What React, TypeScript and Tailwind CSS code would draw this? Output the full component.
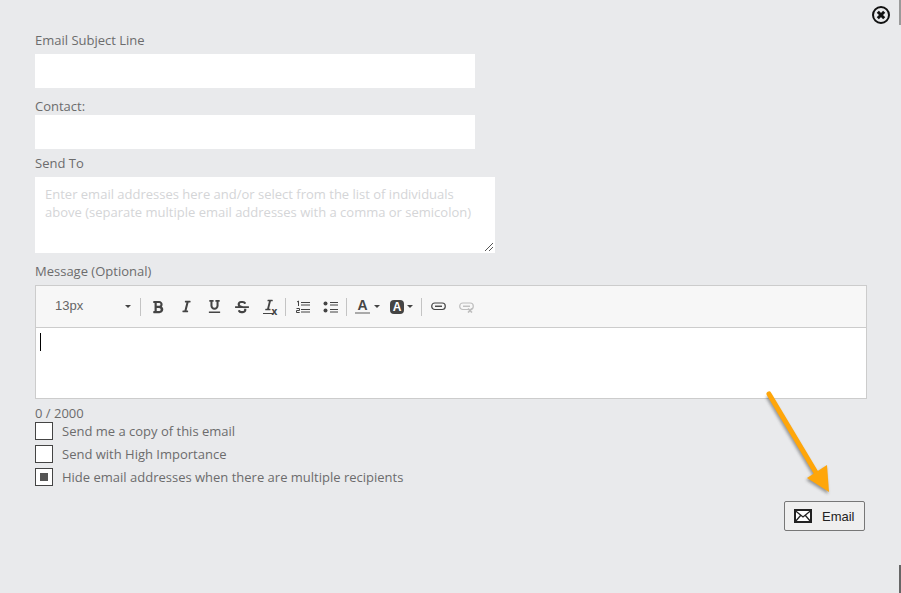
import type { ReactNode } from 'react';
import { FaBold, FaItalic, FaStrikethrough, FaUnderline } from 'react-icons/fa';

const Caret = ({ className = '' }: { className?: string }) => (
  <span className={`inline-block w-0 h-0 border-x-[3px] border-x-transparent border-t-[3px] border-t-[#444] ${className}`} />
);

const Divider = () => <span className="block w-px h-[18px] bg-[#c4c4c4]" />;

const Tool = ({ children }: { children: ReactNode }) => (
  <span className="w-[28px] h-[18px] flex items-center justify-center">{children}</span>
);

const LinkIcon = ({ off = false }: { off?: boolean }) => (
  <svg width="15" height="12" viewBox="0 0 15 12" fill="none" stroke={off ? '#bdbdbd' : '#444'} strokeWidth="1.2">
    <rect x="0.75" y="2" width="13.5" height="6.5" rx="3" />
    <path d="M4 5.25h7" strokeWidth="1.4" />
    {off && <path d="M9 7.5l4 4M13 7.5l-4 4" strokeWidth="1.6" />}
  </svg>
);

const Check = ({ label, checked = false, className = '' }: { label: string; checked?: boolean; className?: string }) => (
  <div className={`flex items-center h-[18px] ${className}`}>
    <span className="w-[18px] h-[18px] bg-white border border-[#444] flex items-center justify-center">
      {checked && <span className="w-2 h-2 bg-[#555]" />}
    </span>
    <span className="ml-[9px] pt-0.5 text-[13px]">{label}</span>
  </div>
);

const App = () => {
  return (
    <div className="relative w-[901px] h-[593px] overflow-hidden bg-[#e9eaec] pl-[35px] pt-[31px] font-['Open_Sans',sans-serif] text-[13px] text-[#6c6c6c]">
      <span className="absolute right-0 top-0 w-0.5 h-[25px] bg-[#9a9a9a]" />
      <span className="absolute right-0 top-[565px] w-0.5 h-7 bg-[#666]" />
      <svg className="absolute left-[872px] top-[6px]" width="18" height="18" viewBox="0 0 18 18">
        <circle cx="9" cy="9" r="8" fill="none" stroke="#111" strokeWidth="2" />
        <path d="M5.8 5.8l6.4 6.4M12.2 5.8l-6.4 6.4" stroke="#111" strokeWidth="3" />
      </svg>

      <div className="h-[18px] leading-[18px]">Email Subject Line</div>
      <div className="mt-[5px] w-[440px] h-[34px] bg-white" />
      <div className="mt-[9px] h-[18px] leading-[18px]">Contact:</div>
      <div className="w-[440px] h-[34px] bg-white" />
      <div className="mt-[5px] h-[18px] leading-[18px]">Send To</div>
      <div className="relative mt-[5px] w-[460px] h-[76px] bg-white px-2.5 py-2 leading-[18px] text-[#d4d5d7]">
        <p>Enter email addresses here and/or select from the list of individuals</p>
        <p>above (separate multiple email addresses with a comma or semicolon)</p>
        <svg className="absolute right-0.5 bottom-0.5" width="8" height="8" viewBox="0 0 8 8">
          <path d="M0 8L8 0M4 8L8 4" stroke="#555" strokeWidth="1" />
        </svg>
      </div>
      <div className="mt-[9px] h-[18px] leading-[18px]">Message (Optional)</div>
      <div className="mt-[5px] w-[832px] h-[114px] border border-[#ccc] bg-white">
        <div className="h-[42px] bg-[#f7f7f7] border-b border-[#ccc] flex items-center pl-[19px] text-[#444]">
          <span className="w-[70px] pb-0.5 text-[13px] text-[#666] font-['Liberation_Sans',sans-serif]">13px</span>
          <Caret />
          <span className="ml-[9px]"><Divider /></span>
          <div className="ml-[3px] flex items-center">
            <Tool><FaBold size={14} /></Tool>
            <Tool><FaItalic size={13} /></Tool>
            <Tool><FaUnderline size={13} /></Tool>
            <Tool><FaStrikethrough size={14} /></Tool>
            <Tool>
              <span className="relative w-[15px] h-[15px]">
                <FaItalic size={12} className="absolute left-0 top-0" />
                <span className="absolute left-0 bottom-0 w-[10px] h-px bg-[#444]" />
                <span className="absolute left-[9px] bottom-[-2px] text-[10px] leading-none font-bold">x</span>
              </span>
            </Tool>
          </div>
          <span className="ml-[1px]"><Divider /></span>
          <svg className="ml-[9px]" width="16" height="14" viewBox="0 0 16 14" fill="none" stroke="#444">
            <path d="M2 2l1.5-1v5M6 2.5h9M6 5h9M1.5 8.5h3v2h-3v2h3.2M6 9.5h9M6 12h9" />
          </svg>
          <svg className="ml-[12px]" width="16" height="14" viewBox="0 0 16 14" fill="#444">
            <circle cx="2.5" cy="3.5" r="2" />
            <circle cx="2.5" cy="10.5" r="2" />
            <path d="M7 2h8v1H7zM7 4.5h8v1H7zM7 9h8v1H7zM7 11.5h8v1H7z" />
          </svg>
          <span className="ml-[7px]"><Divider /></span>
          <span className="ml-[8px] relative w-[15px] h-[15px] flex justify-center text-[14px] leading-[13px] font-bold font-['Liberation_Sans',sans-serif]">
            A
            <span className="absolute left-0 bottom-0 w-[15px] h-0.5 bg-[#aaa]" />
          </span>
          <Caret className="ml-[4px]" />
          <span className="ml-[10px] w-[14px] h-[14px] bg-[#444] rounded-sm text-white flex items-center justify-center text-[12px] font-bold font-['Liberation_Sans',sans-serif]">A</span>
          <Caret className="ml-[3px]" />
          <span className="ml-[8px]"><Divider /></span>
          <span className="ml-[9px]"><LinkIcon /></span>
          <span className="ml-[13px]"><LinkIcon off /></span>
        </div>
        <div className="pl-1 pt-[5px]"><div className="w-px h-[18px] bg-black" /></div>
      </div>
      <div className="mt-[5px] h-[18px] leading-[18px]">0 / 2000</div>
      <Check label="Send me a copy of this email" />
      <Check label="Send with High Importance" className="mt-[5px]" />
      <Check label="Hide email addresses when there are multiple recipients" checked className="mt-[5px]" />

      <div className="flex justify-end w-[830px] mt-[15px]">
        <button className="w-[81px] h-[30px] border border-[#777] rounded-[2px] bg-[#efefef] flex items-center pl-[9px] text-[13px] text-[#222] font-['Liberation_Sans',sans-serif]">
          <svg width="18" height="14" viewBox="0 0 18 14">
            <rect x="1" y="1" width="16" height="12" fill="#fff" stroke="#222" strokeWidth="2" />
            <path d="M1 1.5l8 6.5 8-6.5M1 13l6-7M17 13l-6-7" fill="none" stroke="#222" strokeWidth="1.3" />
          </svg>
          <span className="ml-[10px] pt-px">Email</span>
        </button>
      </div>

      <svg className="absolute left-[760px] top-[385px] pointer-events-none" width="80" height="115" viewBox="0 0 80 115">
        <defs>
          <filter id="arrowShadow" x="-20%" y="-20%" width="140%" height="140%">
            <feGaussianBlur stdDeviation="1.4" />
          </filter>
        </defs>
        <g fill="#333" stroke="#333" opacity="0.45" transform="translate(-1 2)" filter="url(#arrowShadow)">
          <path d="M9 9L58 91" strokeWidth="5" />
          <path d="M47 93L67 80L69 107Z" strokeWidth="0" />
        </g>
        <path d="M9 9L58 91" stroke="#ffa60a" strokeWidth="5" strokeLinecap="round" />
        <path d="M47 93L67 80L69 107Z" fill="#ffa60a" />
      </svg>
    </div>
  );
};

export default App;
